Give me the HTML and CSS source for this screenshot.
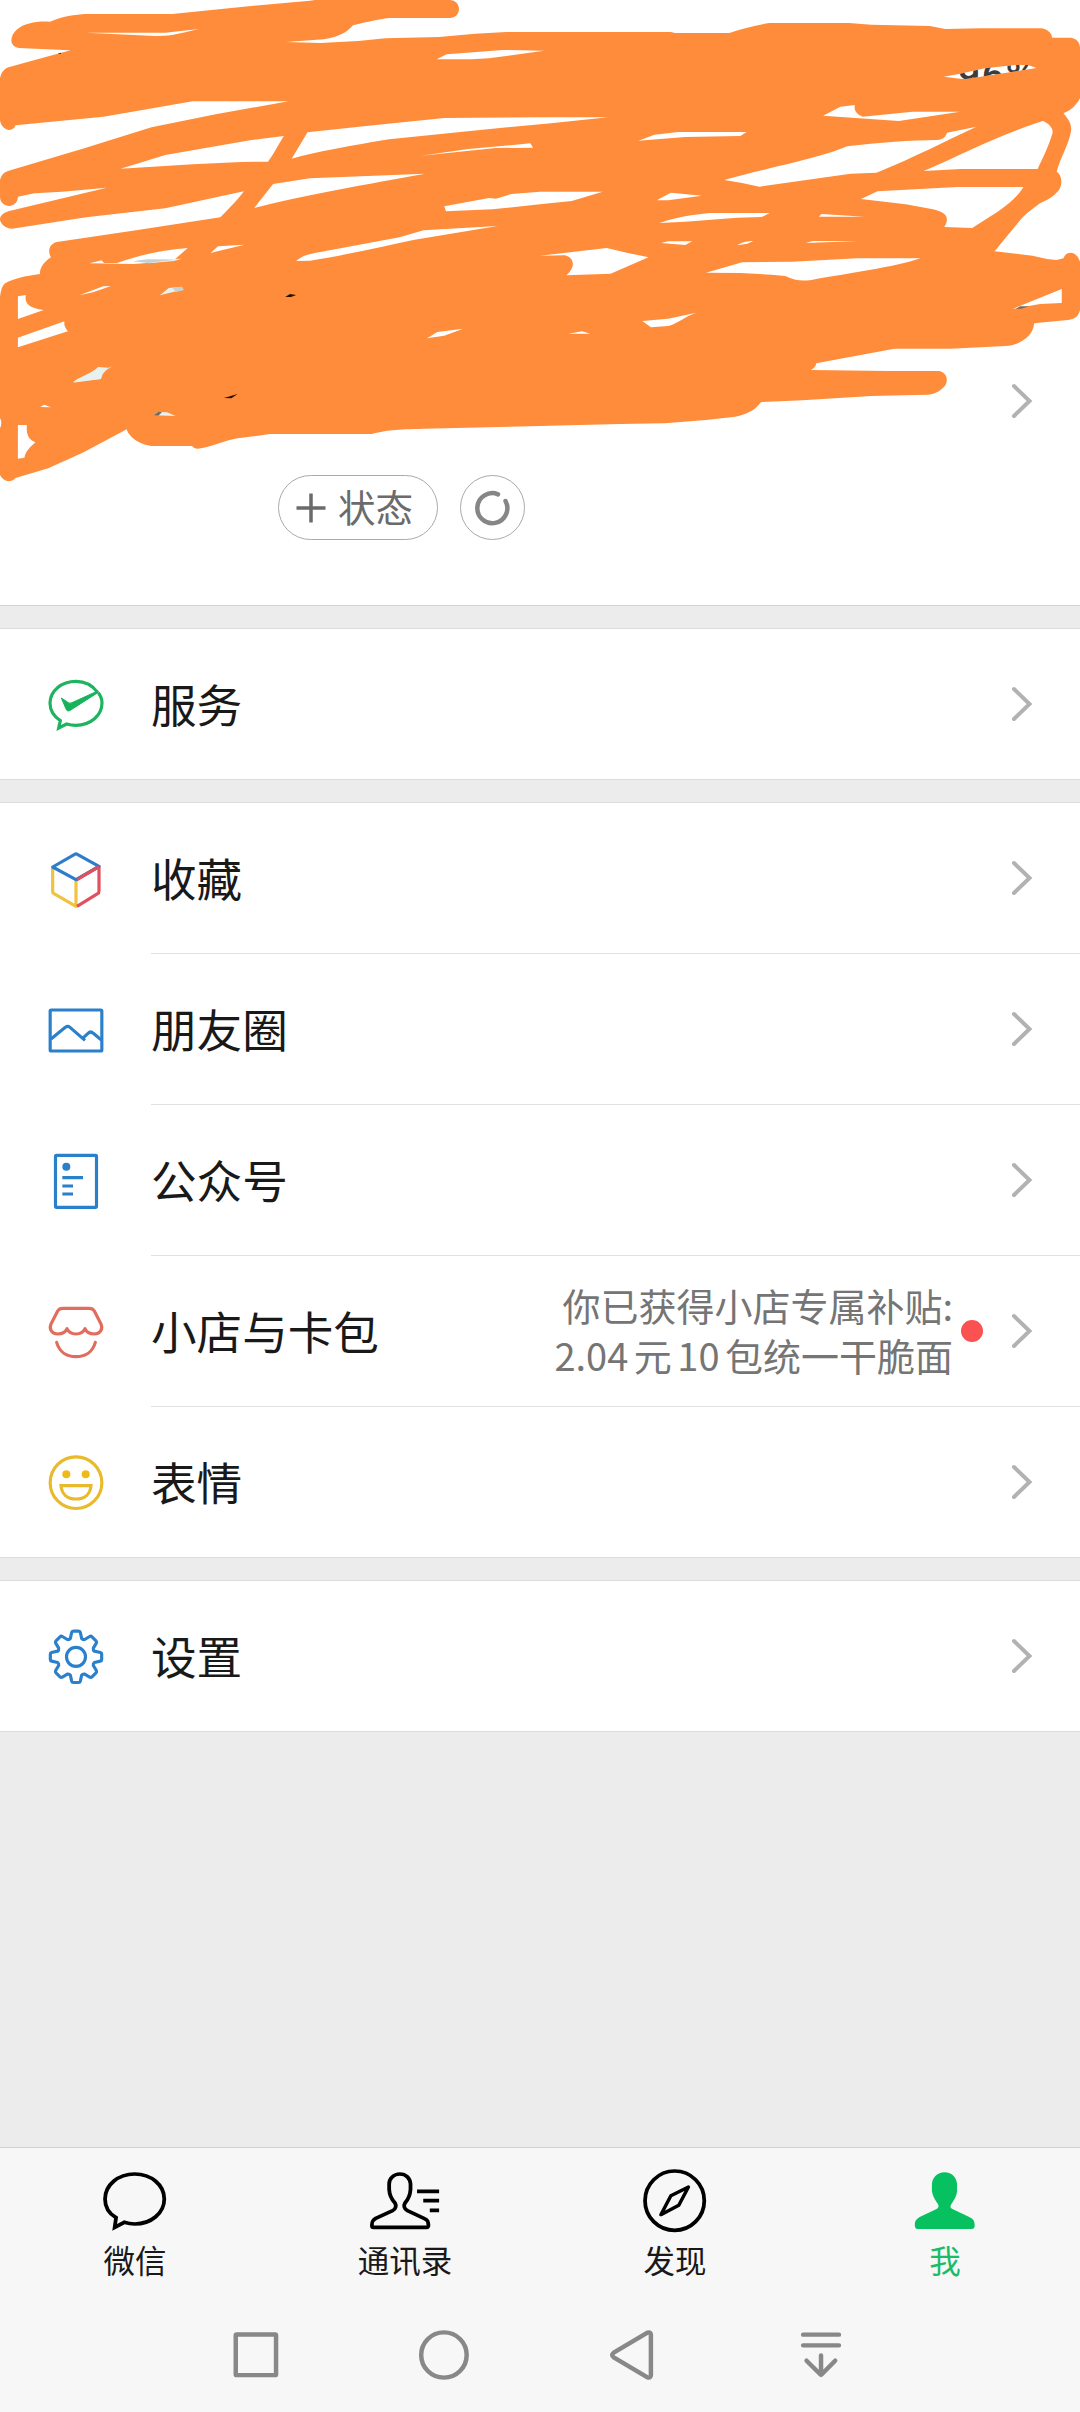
FILE: index.html
```html
<!DOCTYPE html>
<html lang="zh-CN">
<head>
<meta charset="utf-8">
<title>我</title>
<link rel="stylesheet" href="styles.css">
</head>
<body>
<svg class="defs" width="0" height="0" aria-hidden="true">
  <symbol id="chevron" viewBox="0 0 24 40"><path d="M4 5 19.500 20 4 35" fill="none" stroke="#b2b2b2" stroke-width="4" stroke-linecap="round" stroke-linejoin="miter"/></symbol>
</svg>
<main class="screen">
  <header class="profile">
    <svg class="scribble" viewBox="0 0 3136 1500" preserveAspectRatio="none" aria-hidden="true">
      <defs>
        <clipPath id="gap"><path d="M2740 230 2788 221 2860 205 2960 194 2985 195 3010 204 2960 212 2800 238Z"/></clipPath>
      </defs>
      <path fill="#ff8c3a" d="M55 144C25 138 28 108 50 88C70 70 105 63 145 65C180 50 210 45 245 42L500 42 650 26 770 14 900 2 915 0H1305C1342 0 1342 54 1305 54H1130C1100 58 1060 67 1025 76C1010 95 985 112 940 118L830 126 930 129 1040 123 1120 115 1275 111 1380 101 1470 96H1948L1960 99H2118C2150 88 2190 76 2235 69H2465L2530 74 2700 78 2745 87 2850 85H3022C3040 86 3055 100 3055 113H3110C3125 115 3136 128 3136 142V295C3125 315 3115 328 3088 340C3105 360 3112 375 3110 392C3105 430 3080 470 3068 515C3085 525 3085 555 3075 570C3060 590 3040 600 3020 610C2980 640 2970 650 2955 670L2888 754 2998 767 3040 777 3068 780 3088 775C3095 753 3125 750 3136 785V930C3130 955 3115 958 3100 960L3003 970C3000 1010 2960 1036 2920 1038L2760 1046H2605L2597 1046 2370 1090C2370 1098 2362 1106 2355 1110L2580 1113H2725C2750 1115 2757 1146 2740 1162C2725 1178 2705 1184 2695 1184L2530 1188 2330 1201 2210 1206C2190 1235 2160 1245 2135 1250L2050 1260 1930 1270 1800 1272 1568 1278 1420 1282 1230 1286C1150 1288 1120 1290 1080 1302H785L690 1315C650 1322 620 1340 575 1346C565 1346 560 1342 558 1338H440C400 1334 371 1305 368 1288L240 1358 140 1405 45 1434C30 1450 10 1445 0 1425V1285C5 1275 5 1262 0 1255V890C5 855 10 850 30 842C55 832 85 826 116 822C115 800 130 785 148 772C138 755 142 732 165 726L400 690 640 652C670 620 690 600 708 574L480 625 250 652 35 686C15 686 0 670 0 657C0 645 15 635 30 632L310 563 180 575 100 580 52 590C52 610 35 618 25 618C10 615 0 605 0 590V540C5 520 15 514 35 509L240 446 440 382 630 342 838 304H560L300 350 45 376C42 388 30 390 25 390C10 388 0 370 0 360V235C3 215 15 203 30 200L130 172 205 151 120 147Z"/>
      <g fill="#fff">
        <path d="M250 98 370 98 480 98 578 87C530 98 500 109 450 108Z"/>
        <path d="M1268 178 1297 163 1460 150 1580 152 1420 175 1370 178Z"/>
        <path d="M350 506 480 465 730 420 824 408C805 440 790 470 778 485L700 486 560 493Z"/>
        <path d="M893 397 1070 377 1290 354 1568 352H1766L1600 370 1430 386 1130 418C1020 437 920 455 847 476Z"/>
        <path d="M1222 467 1360 447 1540 430 1548 443 1440 444Z"/>
        <path d="M793 552 900 535 1235 521C1080 550 860 590 738 624Z"/>
        <path d="M1290 619 1420 594 1440 596 1485 582 1568 575H1750L1660 603 1568 613 1430 628 1295 634Z"/>
        <path d="M860 783C880 766 890 764 930 756L1160 712 1230 691 1445 678 1200 720C1080 747 980 770 900 782Z"/>
        <path d="M611 759 633 739 710 734Z"/>
        <path d="M260 790 295 781 302 789 340 789C400 767 470 749 545 744L508 778 470 785 390 792Z"/>
        <path d="M1854 422 1900 404 1970 396H2168L2150 408 1990 411Z"/>
        <path d="M2390 347 2440 320 2482 315C2480 330 2485 342 2505 350L2650 335H2788L2610 363Z"/>
        <path d="M2103 540C2210 508 2380 475 2460 439C2550 427 2650 421 2720 420 2740 418 2745 410 2750 398L2835 380C2740 425 2660 470 2545 518L2470 521 2205 560 2155 549Z"/>
        <path d="M2682 513C2800 460 2900 405 3028 363 3045 370 3060 385 3056 400 3045 440 3025 480 3013 507H2790Z"/>
        <path d="M2500 597 2548 574 2780 561H2972C2940 615 2880 645 2823 684L2742 681C2760 650 2745 635 2705 627L2630 613Z"/>
        <path d="M1907 601 1948 578 2038 587 1940 601Z"/>
        <path d="M1915 669C1970 650 2010 645 2060 639H2235L2212 651 2140 653 1990 665Z"/>
        <path d="M2378 650 2385 642 2510 650Z"/>
        <path d="M1920 729 1940 724H2010L1990 735Z"/>
        <path d="M2140 736C2160 725 2170 723 2187 723L2170 731Z"/>
        <path d="M2340 729 2360 723H2490Z"/>
        <path d="M1568 767 1762 744 1820 758 1883 772 1773 821 1645 826C1675 798 1665 772 1640 766Z"/>
        <path d="M2050 818 2155 787 2300 785 2490 775H2673C2600 801 2450 823 2370 837 2335 845 2310 843 2280 828L2240 824 2150 819Z"/>
        <path d="M2940 927 3083 867V909L3020 912Z"/>
        <path d="M1865 963 1940 956 2022 938C1990 948 1970 970 1940 978L1890 982Z"/>
        <path d="M1650 1001 1690 994 1714 1001Z"/>
        <path d="M230 886 300 859 322 858 270 877Z"/>
        <path d="M52 889 75 885C70 910 85 925 127 930L52 957Z"/>
        <path d="M52 1013 187 964C185 980 192 985 197 994L52 1042Z"/>
        <path d="M52 1275H78C75 1305 85 1320 103 1327C80 1347 73 1360 71 1373L52 1376Z"/>
        <path d="M1240 1015 1270 996 1345 986 1290 1007Z"/>
        <path d="M117 1221 128 1214 148 1222Z"/>
      </g>
      <g fill="#e8f1f0">
        <path d="M400 781 420 779 528 776 505 783 430 790Z"/>
        <path d="M464 886 490 864 528 860 533 870 500 877Z"/>
        <path d="M212 1148C230 1138 260 1124 290 1121L315 1103 328 1098C298 1114 297 1125 293 1137Z"/>
        <path d="M212 1146C230 1130 260 1125 285 1101L315 1103C298 1114 297 1125 293 1137Z"/>
        <path d="M445 1246 458 1236 485 1237 510 1248Z"/>
      </g>
      <g fill="#c3d2d1"><path d="M385 784 430 778 505 779 430 789Z"/><path d="M500 863 528 860 533 870 510 876Z"/></g>
      <path fill="#271408" d="M828 891 842 882 860 885 845 891ZM650 1194 690 1182 672 1195ZM168 160 177 158 176 162Z"/>
      <path fill="#766b61" d="M445 1246 460 1235 470 1237 460 1247ZM2950 926 2962 919 2988 919 2965 926Z"/>
      <g clip-path="url(#gap)">
        <path fill="#fff" d="M2740 190H3010V240H2740Z"/>
        <text class="battery" x="2780" y="266">96%</text>
      </g>
    </svg>
    <svg class="chevron profile-arrow"><use href="#chevron"/></svg>
    <div class="status">
      <div class="pill"><svg viewBox="0 0 30 30"><path d="M15 .5v29M.5 15h29" fill="none" stroke="#6b6b6b" stroke-width="3.500"/></svg><span>状态</span></div>
      <div class="round"><svg viewBox="0 0 36 36"><path d="M24 4.300A15 15 0 1 0 31.500 11" fill="none" stroke="#868686" stroke-width="4.500" stroke-linecap="round"/></svg></div>
    </div>
  </header>

  <section class="group">
    <div class="row">
      <svg class="icon" viewBox="138 102 180 180"><path d="M293 157C278 137 254 124 228 124 184 124 150 153 150 189 150 212 163 230 181 242L176 264 200 252Q214 256 228 256C272 256 306 226 306 189Q306 172 295 158" fill="none" stroke="#1eb35f" stroke-width="9.500"/><path d="M184 174 205 188Q210 191 216 188L293 153 295 157 209 212Q202 215 199 209Z" fill="#16b35b" stroke="#16b35b" stroke-width="3"/></svg>
      <div class="body"><span class="name">服务</span><svg class="chevron"><use href="#chevron"/></svg></div>
    </div>
  </section>

  <section class="group">
    <div class="row">
      <svg class="icon" viewBox="138 625 180 180"><g fill="none" stroke-width="9.500" stroke-linejoin="round"><path d="M158 681V753Q158 757 162 759L228 797V718" stroke="#f0c23f"/><path d="M228 718 297 678V752Q297 757 293 759L231 797" stroke="#e0505f"/><path d="M158 679 224 641Q228 638 232 641L297 677 228 717Z" stroke="#2e7dcc"/><path d="M232 716 297 678" stroke="#e0505f"/></g></svg>
      <div class="body"><span class="name">收藏</span><svg class="chevron"><use href="#chevron"/></svg></div>
    </div>
    <div class="row">
      <svg class="icon" viewBox="138 118 180 180"><g fill="none" stroke="#2b80cc" stroke-width="9.500" stroke-linejoin="round"><rect x="150.500" y="148" width="155" height="123" rx="3"/><path d="M152 236 196 200Q203 194 210 200L255 239M247 234 264 218Q272 210 280 218L304 238"/></g></svg>
      <div class="body"><span class="name">朋友圈</span><svg class="chevron"><use href="#chevron"/></svg></div>
    </div>
    <div class="row">
      <svg class="icon" viewBox="138 571 180 180"><rect x="166.500" y="584" width="123" height="156" rx="3" fill="none" stroke="#2b80cc" stroke-width="9.500"/><circle cx="199" cy="618" r="12" fill="#2b80cc"/><path d="M187 651H249M187 676H219M187 700H219" stroke="#2b80cc" stroke-width="9.500"/></svg>
      <div class="body"><span class="name">公众号</span><svg class="chevron"><use href="#chevron"/></svg></div>
    </div>
    <div class="row">
      <svg class="icon" viewBox="138 124 180 180"><g fill="none" stroke="#e06d5d" stroke-width="9.500" stroke-linejoin="round" stroke-linecap="round"><path d="M188 143H268Q278 143 283 151L303 190C309 204 302 220 283 220 268 220 260 216 255 204 250 215 242 220 228 220 214 220 206 215 201 204 196 216 188 220 173 220 154 220 147 204 153 190L173 151Q178 143 188 143Z"/><path d="M170 245C178 274 201 288 228 288 255 288 278 274 286 245"/></g></svg>
      <div class="body"><span class="name">小店与卡包</span>
        <p class="hint">你已获得小店专属补贴:<br>2.04<i></i>元<i></i>10<i></i>包统一干脆面</p>
        <span class="dot"></span><svg class="chevron"><use href="#chevron"/></svg></div>
    </div>
    <div class="row">
      <svg class="icon" viewBox="138 576 180 180"><g fill="none" stroke="#e9ba2b" stroke-width="9.500"><circle cx="228" cy="668" r="77.500"/><path d="M183 677H273C271 702 254 717 228 717 202 717 185 702 183 677Z"/></g><g fill="#edb91b"><circle cx="199" cy="643" r="12"/><circle cx="257" cy="643" r="12"/></g></svg>
      <div class="body"><span class="name">表情</span><svg class="chevron"><use href="#chevron"/></svg></div>
    </div>
  </section>

  <section class="group">
    <div class="row">
      <svg class="icon" viewBox="-90 -90 180 180"><g transform="translate(0 2.500)" fill="none" stroke="#2b80cc" stroke-width="9.500" stroke-linejoin="round"><circle r="28.500"/><path d="M-8 -77H8Q12 -77 13 -73L17 -55Q20 -51 26 -52L41 -61Q45 -63 48 -60L60 -48Q63 -45 61 -41L52 -26Q51 -20 55 -17L73 -13Q77 -12 77 -8V8Q77 12 73 13L55 17Q51 20 52 26L61 41Q63 45 60 48L48 60Q45 63 41 61L26 52Q20 51 17 55L13 73Q12 77 8 77H-8Q-12 77 -13 73L-17 55Q-20 51 -26 52L-41 61Q-45 63 -48 60L-60 48Q-63 45 -61 41L-52 26Q-51 20 -55 17L-73 13Q-77 12 -77 8V-8Q-77 -12 -73 -13L-55 -17Q-51 -20 -52 -26L-61 -41Q-63 -45 -60 -48L-48 -60Q-45 -63 -41 -61L-26 -52Q-20 -51 -17 -55L-13 -73Q-12 -77 -8 -77Z"/></g></svg>
      <div class="body"><span class="name">设置</span><svg class="chevron"><use href="#chevron"/></svg></div>
    </div>
  </section>

  <footer class="bottom">
    <nav class="tabs">
      <a class="tab"><svg viewBox="287.500 114 209 198" preserveAspectRatio="none"><path d="M337 263C317 251 305 230 305 207 305 165 343 132 391 132 439 132 477 165 477 207 477 249 439 282 391 282Q376 282 361 277L333 292Z" fill="none" stroke="#000" stroke-width="11"/></svg><span>微信</span></a>
      <a class="tab"><svg viewBox="1071.500 114 209 198" preserveAspectRatio="none"><g fill="none" stroke="#000" stroke-width="11"><path stroke-linejoin="round" d="M1161 132C1143 132 1130 146 1130 162V178C1131 195 1137 208 1147 219 1151 226 1150 237 1140 242L1091 265C1079 272 1080 279 1080 287Q1080 292 1085 292H1239Q1244 292 1244 285C1243 274 1242 270 1231 265L1183 242C1173 236 1172 226 1176 219 1186 207 1191 195 1192 178V162C1191 145 1179 132 1161 132Z"/><path d="M1211 184H1275M1229 212H1275M1248 241H1275"/></g></svg><span>通讯录</span></a>
      <a class="tab"><svg viewBox="287.500 114 209 198" preserveAspectRatio="none"><g fill="none" stroke="#000" stroke-width="11" stroke-linejoin="round"><ellipse cx="391" cy="212" rx="86" ry="89"/><path stroke-width="10" d="M431 171 380 197 351 254 403 226Z"/></g></svg><span>发现</span></a>
      <a class="tab active"><svg viewBox="1071.500 114 209 198" preserveAspectRatio="none"><path fill="#07c160" d="M1175 127C1154 127 1139 142 1138 163V183C1141 201 1148 211 1155 221 1159 229 1158 233 1150 238L1107 259C1090 268 1087 276 1089 290Q1090 297 1099 297H1253Q1261 297 1262 290C1263 275 1260 267 1245 260L1199 238C1191 233 1190 229 1195 221 1202 211 1209 201 1211 183V163C1210 142 1196 127 1175 127Z"/></svg><span>我</span></a>
    </nav>
    <nav class="system">
      <svg viewBox="656.200 585 174.200 180" preserveAspectRatio="none"><rect x="684.500" y="613.500" width="117" height="122" rx="3"/></svg>
      <svg viewBox="1202.100 585 174.200 180" preserveAspectRatio="none"><ellipse cx="1289" cy="675" rx="66" ry="68"/></svg>
      <svg viewBox="180 585 174.200 180" preserveAspectRatio="none"><path d="M312 608 214 668Q205 675 214 682L312 742Q322 745 322 735V615Q322 605 312 608Z"/></svg>
      <svg viewBox="725.900 585 174.200 180" preserveAspectRatio="none"><path d="M764 614H868M764 646H868M816 676V734M774 692 816 735 857 692"/></svg>
    </nav>
  </footer>
</main>
</body>
</html>
```
FILE: styles.css
```css
* { box-sizing: border-box; }
body {
  margin: 0;
  background: #ececec;
  color: #191919;
  font-family: "Noto Sans CJK SC", "Noto Sans", sans-serif;
}
.defs { position: absolute; }
svg { display: block; flex: none; }
.screen {
  width: 1080px;
  height: 2412px;
  display: flex;
  flex-direction: column;
  gap: 22px;
  overflow: hidden;
}

.profile {
  position: relative;
  height: 606px;
  background: #fff;
  border-bottom: 1px solid #d3d3d3;
  display: flex;
  flex-direction: column;
  padding: 381px 46px 0 278px;
}
.scribble {
  position: absolute;
  left: 0;
  top: 0;
  width: 1080px;
  height: 500px;
}
.battery {
  font: 500 116px Roboto, sans-serif;
  letter-spacing: 4px;
  fill: #3c3c3c;
}
.chevron { width: 24px; height: 40px; }
.profile-arrow { align-self: flex-end; }
.status {
  display: flex;
  gap: 22px;
  margin-top: 54px;
}
.pill, .round {
  height: 65px;
  border: 1px solid #aaa;
  border-radius: 33px;
  display: flex;
  align-items: center;
}
.pill {
  width: 160px;
  padding-left: 17px;
  gap: 12px;
  font-size: 37.500px;
  line-height: 60px;
  color: #6b6b6b;
}
.pill svg { width: 30px; height: 30px; }
.pill span { padding-bottom: 3px; }
.round { width: 65px; justify-content: center; }
.round svg { width: 36px; height: 36px; margin-right: 1px; }

.group {
  background: #fff;
  border-top: 1px solid #dcdcdc;
}
.row {
  display: flex;
  align-items: center;
  height: 151px;
  padding-left: 46px;
}
.row:last-child .body { border-bottom: 0; }
.row:last-child { border-bottom: 1px solid #dcdcdc; }
.icon { width: 60px; height: 60px; margin-right: 45px; }
.body {
  flex: 1;
  height: 151px;
  display: flex;
  align-items: center;
  padding-right: 46px;
  border-bottom: 1px solid #e0e0e0;
}
.name {
  flex: 1;
  padding-bottom: 3px;
  font-size: 45.600px;
  line-height: 66px;
  white-space: nowrap;
}
.hint {
  margin: 0;
  padding-bottom: 3px;
  font-size: 38px;
  line-height: 50px;
  text-align: right;
  color: #757575;
  white-space: nowrap;
}
.hint i { display: inline-block; width: 5.500px; }
.dot {
  width: 22px;
  height: 22px;
  margin: 0 27px 0 8px;
  border-radius: 50%;
  background: #fa5151;
}

.bottom {
  height: 265px;
  margin-top: auto;
  background: #f7f7f7;
  border-top: 1px solid #d2d2d2;
}
.tabs {
  display: grid;
  grid-template-columns: repeat(4, 270px);
  height: 147px;
  padding-top: 20px;
}
.tab {
  display: flex;
  flex-direction: column;
  align-items: center;
  font-size: 31.500px;
  line-height: 46px;
}
.tab svg { width: 72px; height: 66px; margin-bottom: 2px; }
.active { color: #1abc68; }
.system {
  display: grid;
  grid-template-columns: repeat(4, 188px);
  justify-items: center;
  padding: 30px 0 0 162px;
}
.system svg {
  width: 60px;
  height: 60px;
  fill: none;
  stroke: #888;
  stroke-width: 13px;
  stroke-linecap: round;
  stroke-linejoin: round;
}
```
